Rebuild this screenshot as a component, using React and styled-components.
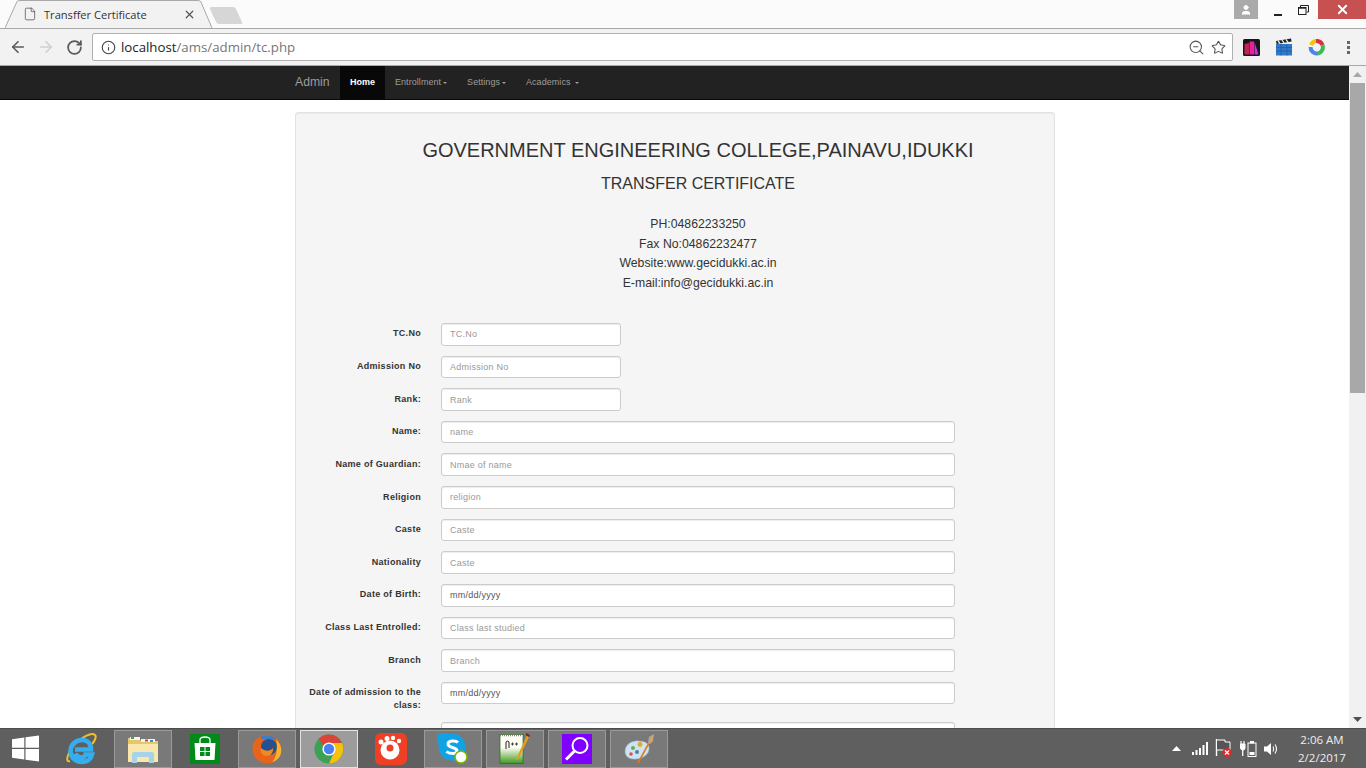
import React from "react"
import styled, { createGlobalStyle } from "styled-components"
import { ArrowLeft, ArrowRight, RotateCw, File, X, Info, ZoomOut, Star, User } from "lucide-react"

const GlobalStyle = createGlobalStyle`
  html, body {
    margin: 0;
    padding: 0;
    height: 768px;
    overflow: hidden;
    background: #fff;
  }
  * { box-sizing: border-box; }
`

const fields = [
  { label: "TC.No", placeholder: "TC.No", short: true },
  { label: "Admission No", placeholder: "Admission No", short: true },
  { label: "Rank:", placeholder: "Rank", short: true },
  { label: "Name:", placeholder: "name" },
  { label: "Name of Guardian:", placeholder: "Nmae of name" },
  { label: "Religion", placeholder: "religion" },
  { label: "Caste", placeholder: "Caste" },
  { label: "Nationality", placeholder: "Caste" },
  { label: "Date of Birth:", value: "mm/dd/yyyy" },
  { label: "Class Last Entrolled:", placeholder: "Class last studied" },
  { label: "Branch", placeholder: "Branch" },
  { label: "Date of admission to the class:", value: "mm/dd/yyyy" },
  { label: "", placeholder: "" },
]

function App() {
  return (
    <Screen>
      <GlobalStyle />
      <TabStrip>
        <Tab>
          <TabShape viewBox="0 0 208 28" width="208" height="28">
            <path d="M0 28 L12 1.5 Q13 .5 15 .5 L193 .5 Q195 .5 196 2 L207 28" fill="#f2f2f2" stroke="#a8a8a8" />
          </TabShape>
          <File size={14} strokeWidth={1.2} color="#444" />
          <TabTitle>Transffer Certificate</TabTitle>
          <X size={13} strokeWidth={2.2} color="#555" />
        </Tab>
        <NewTab />
        <WindowControls>
          <UserBadge><User size={12} fill="#fff" color="#fff" /></UserBadge>
          <WinButton>
            <svg width="9" height="12"><rect x="0" y="10" width="8" height="2" fill="#222" /></svg>
          </WinButton>
          <WinButton>
            <svg width="11" height="10" fill="none" stroke="#222">
              <path d="M2.5 2 V.5 H10.5 V7 H8.5" />
              <rect x=".5" y="2.5" width="7.5" height="7" />
              <path d="M0 3 H8" strokeWidth="1.4" />
            </svg>
          </WinButton>
          <CloseButton><X size={15} strokeWidth={3} color="#fff" /></CloseButton>
        </WindowControls>
      </TabStrip>

      <Toolbar>
        <NavIcon><ArrowLeft size={18} strokeWidth={2.2} color="#5a5a5a" /></NavIcon>
        <NavIcon><ArrowRight size={18} strokeWidth={2.2} color="#d0d0d0" /></NavIcon>
        <NavIcon><RotateCw size={17} strokeWidth={2.5} color="#5a5a5a" /></NavIcon>
        <Omnibox>
          <Info size={15} strokeWidth={1.8} color="#444" />
          <Url>localhost<span>/ams/admin/tc.php</span></Url>
          <ZoomOut size={17} strokeWidth={1.5} color="#555" />
          <Star size={15} strokeWidth={1.7} color="#555" />
        </Omnibox>
        <Extensions>
          <BooksIcon />
          <ClapperIcon />
          <RingIcon />
          <MenuDots><i /><i /><i /></MenuDots>
        </Extensions>
      </Toolbar>

      <Viewport>
        <Page>
          <NavBar>
            <Brand>Admin</Brand>
            <NavItem $active>Home</NavItem>
            <NavItem>Entrollment<Caret /></NavItem>
            <NavItem>Settings<Caret /></NavItem>
            <NavItem>Academics <Caret /></NavItem>
          </NavBar>
          <Well>
            <Header>
              <Title>GOVERNMENT ENGINEERING COLLEGE,PAINAVU,IDUKKI</Title>
              <SubTitle>TRANSFER CERTIFICATE</SubTitle>
              <Contact>
                <div>PH:04862233250</div>
                <div>Fax No:04862232477</div>
                <div>Website:www.gecidukki.ac.in</div>
                <div>E-mail:info@gecidukki.ac.in</div>
              </Contact>
            </Header>
            <Form>
              {fields.map((f, i) => (
                <Row key={i}>
                  <Label>{f.label}</Label>
                  <Input
                    $short={f.short}
                    placeholder={f.placeholder}
                    defaultValue={f.value}
                    readOnly
                  />
                </Row>
              ))}
            </Form>
          </Well>
        </Page>
        <Scrollbar>
          <ScrollArrow><svg width="9" height="5"><path d="M0 5 L4.5 0 L9 5Z" fill="#a8a8a8" /></svg></ScrollArrow>
          <ScrollThumb />
          <ScrollRest />
          <ScrollArrow><svg width="9" height="5"><path d="M0 0 L4.5 5 L9 0Z" fill="#505050" /></svg></ScrollArrow>
        </Scrollbar>
      </Viewport>

      <Taskbar>
        <StartSlot><WindowsLogo /></StartSlot>
        <TaskSlot><IeIcon /></TaskSlot>
        <TaskSlot $open><ExplorerIcon /></TaskSlot>
        <TaskSlot><StoreIcon /></TaskSlot>
        <TaskSlot $open><FirefoxIcon /></TaskSlot>
        <TaskSlot $open $active><ChromeIcon /></TaskSlot>
        <TaskSlot><GomIcon /></TaskSlot>
        <TaskSlot $open><SkypeIcon /></TaskSlot>
        <TaskSlot $open><NotepadIcon /></TaskSlot>
        <TaskSlot $open><SearchIcon /></TaskSlot>
        <TaskSlot $open><PaintIcon /></TaskSlot>
        <Tray>
          <TrayIcons />
          <Clock>
            <div>2:06 AM</div>
            <div>2/2/2017</div>
          </Clock>
        </Tray>
      </Taskbar>
    </Screen>
  )
}

export default App

/* browser chrome drawings */

function BooksIcon() {
  return (
    <svg width="17" height="17" viewBox="0 0 17 17">
      <rect width="17" height="17" rx="1.5" fill="#16161a" />
      <path d="M1.5 5 L6 4 V15.5 H1.5Z" fill="#c2264f" />
      <path d="M6.5 2.5 L11 2.5 V15.5 H6.5Z" fill="#e4209a" />
      <path d="M11.5 3 L15.5 15.5 H11.5Z" fill="#c930d8" />
    </svg>
  )
}

function ClapperIcon() {
  return (
    <svg width="18" height="18" viewBox="0 0 18 18">
      <path d="M1 3 L16 0.5 L16.6 3.5 L1.6 6Z" fill="#222" />
      <path d="M3 2.6 L5 5.6 M7 2 L9 5 M11 1.3 L13 4.3" stroke="#eee" strokeWidth="1.3" />
      <rect x="1" y="6" width="16" height="11.5" fill="#3278c8" />
      <path d="M1 9.5 H17 M1 13 H17 M6 6 V17.5 M12 6 V17.5" stroke="#1f5a9f" strokeWidth=".7" />
    </svg>
  )
}

function RingIcon() {
  return (
    <svg width="17" height="17" viewBox="0 0 17 17" fill="none" strokeWidth="4">
      <path d="M3 6 A6.5 6.5 0 0 1 8 2" stroke="#f4c20d" />
      <path d="M8 2 A6.5 6.5 0 0 1 14.5 6" stroke="#db3236" />
      <path d="M14.5 6 A6.5 6.5 0 0 1 10 14.5" stroke="#3cba54" />
      <path d="M10 14.5 A6.5 6.5 0 0 1 2.5 8" stroke="#4885ed" />
    </svg>
  )
}

/* taskbar drawings */

function WindowsLogo() {
  return (
    <svg width="27" height="27" viewBox="0 0 27 27" fill="#fff">
      <path d="M0 4.2 L12.3 2.5 V12.8 H0Z" />
      <path d="M13.5 2.3 L27 .4 V12.8 H13.5Z" />
      <path d="M0 14 H12.3 V24.5 L0 22.8Z" />
      <path d="M13.5 14 H27 V26.6 L13.5 24.7Z" />
    </svg>
  )
}

function IeIcon() {
  return (
    <svg width="32" height="32" viewBox="0 0 32 32" fill="none">
      <path d="M5 28 C0 30 2 21 9 12 C16 4 27 -1 30 2 C32 4 29 9 27 11" stroke="#f0bf2c" strokeWidth="2" />
      <path d="M10 16.5 H26 C26 10 22 7 17 7 C10 7 5.5 12.5 5.5 18 C5.5 25 11 29 17 29 C22 29 26 26 27 21.5 H20.5 C20 23.5 18.5 24.5 16.5 24.5 C13 24.5 11 22 10.5 20.5" stroke="#35aef0" strokeWidth="4.6" />
    </svg>
  )
}

function ExplorerIcon() {
  return (
    <svg width="32" height="28" viewBox="0 0 32 28">
      <path d="M1 3 H12 L14 6 H31 V26 H1Z" fill="#e8c66d" />
      <rect x="3" y="2" width="10" height="3" fill="#f4f4f0" />
      <rect x="4" y="2" width="3" height="2" fill="#3aa655" />
      <rect x="14" y="4" width="14" height="3" fill="#f4f4f0" />
      <rect x="18" y="4.5" width="3" height="2" fill="#c44" />
      <rect x="23" y="5" width="3" height="2" fill="#48c" />
      <path d="M1 9 H31 V27 H1Z" fill="#f8e8ad" />
      <path d="M5 28 V19 Q5 17 7 17 H25 Q27 17 27 19 V28 H22 V22 H10 V28Z" fill="#a7d3ea" />
    </svg>
  )
}

function StoreIcon() {
  return (
    <svg width="30" height="30" viewBox="0 0 30 30">
      <rect width="30" height="30" fill="#008a17" />
      <path d="M10 9 V6 Q10 3 15 3 Q20 3 20 6 V9" fill="none" stroke="#fff" strokeWidth="1.3" />
      <path d="M4.5 9 H25.5 L24.5 26 H5.5Z" fill="#fff" />
      <path d="M10 13 H14.5 V17 H10Z M15.5 13 H20 V17 H15.5Z M10 18 H14.5 V22 H10Z M15.5 18 H20 V22 H15.5Z" fill="#008a17" />
    </svg>
  )
}

function FirefoxIcon() {
  return (
    <svg width="30" height="30" viewBox="0 0 30 30">
      <circle cx="15" cy="15" r="14.5" fill="#e8641b" />
      <path d="M8 3 A14.5 14.5 0 0 1 29 12 C27 7 23 5 19 5 C14 5 11 7 8 3Z" fill="#3b7fc4" />
      <circle cx="17" cy="13" r="8" fill="#27508f" />
      <path d="M9 14 C12 17 18 18 21 14 C22 20 16 24 11 21 C9 19 8 17 9 14Z" fill="#f08a1f" />
      <path d="M24 5 C28 9 30 14 29 19 C28 24 24 27 20 28 C25 23 26 13 24 5Z" fill="#f9b32c" />
    </svg>
  )
}

function ChromeIcon() {
  return (
    <svg width="30" height="30" viewBox="0 0 30 30">
      <circle cx="15" cy="15" r="14.5" fill="#3ba153" />
      <path d="M15 .5 A14.5 14.5 0 0 1 28 9 H15 A6 6 0 0 0 9.5 12 L4.5 5 A14.5 14.5 0 0 1 15 .5Z" fill="#db4437" />
      <path d="M28 9 A14.5 14.5 0 0 1 15 29.5 L20 18.5 A6 6 0 0 0 20 12 L17 9Z" fill="#f4c20d" />
      <circle cx="15" cy="15" r="6.6" fill="#fff" />
      <circle cx="15" cy="15" r="5.2" fill="#4a80f0" />
    </svg>
  )
}

function GomIcon() {
  return (
    <svg width="32" height="32" viewBox="0 0 32 32">
      <rect width="32" height="32" rx="6" fill="#ef3f24" />
      <circle cx="15" cy="17" r="9.5" fill="#fff" />
      <circle cx="15" cy="15" r="3.5" fill="#ef3f24" />
      <circle cx="6" cy="9" r="2.5" fill="#fff" />
      <circle cx="12" cy="5.5" r="2.5" fill="#fff" />
      <circle cx="18" cy="5" r="2.2" fill="#fff" />
      <circle cx="24" cy="8" r="2.2" fill="#fff" />
    </svg>
  )
}

function SkypeIcon() {
  return (
    <svg width="32" height="32" viewBox="0 0 32 32">
      <circle cx="15" cy="14" r="13.5" fill="#0fa3e6" />
      <rect x="0" y="0" width="12" height="12" rx="5" fill="#0fa3e6" />
      <path d="M21 9.5 C19 7.5 11 7 11 11 C11 15.5 20 13.5 20 18 C20 21.5 12 21 9.5 18.5" fill="none" stroke="#fff" strokeWidth="3" />
      <circle cx="24" cy="24" r="6" fill="#fff" stroke="#7ab800" strokeWidth="1.6" />
    </svg>
  )
}

function NotepadIcon() {
  return (
    <svg width="32" height="32" viewBox="0 0 32 32">
      <defs>
        <linearGradient id="np" x1="0" y1="0" x2="0" y2="1">
          <stop offset="0.45" stopColor="#fdfdf4" />
          <stop offset="1" stopColor="#3f9a1e" />
        </linearGradient>
      </defs>
      <rect x="1" y="1.5" width="23" height="29" fill="url(#np)" stroke="#2a6a12" strokeWidth=".7" />
      <path d="M1 2.5 H22" stroke="#888" strokeWidth="1.5" strokeDasharray="1 1" />
      <path d="M7 16 V9 Q9 7 10 9 V15" fill="none" stroke="#222" strokeWidth="1" />
      <path d="M12 11 H15 M13.5 9.5 V12.5 M16 11 H19 M17.5 9.5 V12.5" stroke="#222" strokeWidth=".8" />
      <path d="M28 2 L18 24 L16.5 27.5 L20 25 L30 4Z" fill="#e3a11a" />
      <path d="M27 0 L31 2 L30 4 L27 2.5Z" fill="#7a2a2a" />
    </svg>
  )
}

function SearchIcon() {
  return (
    <svg width="30" height="30" viewBox="0 0 30 30">
      <rect width="30" height="30" fill="#7f00ff" />
      <circle cx="18" cy="11.5" r="7.5" fill="none" stroke="#fff" strokeWidth="2" />
      <path d="M12.5 17 L4 25.5" stroke="#fff" strokeWidth="3" />
    </svg>
  )
}

function PaintIcon() {
  return (
    <svg width="32" height="32" viewBox="0 0 32 32">
      <path d="M2 18 C2 11 10 7 16 8 C24 8 27 12 26 17 C25 23 17 27 9 26 C4 25 2 22 2 18Z" fill="#cfe4f2" stroke="#7fa9c4" strokeWidth=".6" />
      <circle cx="10" cy="15" r="2" fill="#5bb05b" />
      <circle cx="17" cy="11.5" r="2.4" fill="#e8a72a" />
      <circle cx="8" cy="21" r="1.8" fill="#d9534f" />
      <circle cx="14" cy="19" r="2" fill="#557fa8" />
      <path d="M26 10 L15 30" stroke="#e07b1a" strokeWidth="1.6" />
      <path d="M25 10 L26 4 L31 1 L30 8 L27 11Z" fill="#c9a47a" />
    </svg>
  )
}

function TrayIcons() {
  return (
    <TrayRow>
      <svg width="9" height="5"><path d="M0 5 L4.5 0 L9 5Z" fill="#fff" /></svg>
      <svg width="16" height="13" fill="#fff">
        <rect x="0" y="10" width="2" height="3" />
        <rect x="3.5" y="8" width="2" height="5" />
        <rect x="7" y="6" width="2" height="7" />
        <rect x="10.5" y="3" width="2" height="10" />
        <rect x="14" y="0" width="2" height="13" />
      </svg>
      <svg width="18" height="19">
        <path d="M1.5 0 V17" stroke="#fff" strokeWidth="1.4" />
        <path d="M2 1 H10 V3 H15 V11 H2" fill="#555" stroke="#fff" />
        <circle cx="12" cy="13.5" r="4.5" fill="#e02a2a" />
        <path d="M10 11.5 L14 15.5 M14 11.5 L10 15.5" stroke="#fff" strokeWidth="1.2" />
      </svg>
      <svg width="17" height="16" fill="none" stroke="#fff">
        <path d="M1 0 V3 M4 0 V3" strokeWidth="1.2" />
        <path d="M.5 3 H5 V7 Q5 9 3 9 Q.5 9 .5 7Z" fill="#fff" />
        <path d="M2.7 9 V15" strokeWidth="1.3" />
        <rect x="8" y="2" width="8" height="13.5" />
        <rect x="10.5" y=".5" width="3" height="1.5" fill="#fff" />
        <rect x="9.5" y="11" width="5" height="3" fill="#fff" stroke="none" />
      </svg>
      <svg width="15" height="14" fill="none" stroke="#fff">
        <path d="M0 4.5 H3 L7 1 V13 L3 9.5 H0Z" fill="#fff" stroke="none" />
        <path d="M9 4.5 Q10.5 7 9 9.5" strokeWidth="1.1" />
        <path d="M11 2.5 Q14 7 11 11.5" strokeWidth="1.1" />
      </svg>
    </TrayRow>
  )
}

/* layout */

const Screen = styled.div`
  width: 1366px;
  height: 768px;
  display: flex;
  flex-direction: column;
  overflow: hidden;
  font-family: "Liberation Sans", Arial, sans-serif;
`

const TabStrip = styled.div`
  height: 29px;
  flex: none;
  display: flex;
  padding-left: 5px;
  background: #fbfbfb;
  border-bottom: 1px solid #a8a8a8;
`

const Tab = styled.div`
  position: relative;
  width: 208px;
  height: 28px;
  padding: 0 17px 0 18px;
  display: flex;
  align-items: center;
  z-index: 1;

  svg:not(:first-child) {
    position: relative;
    flex: none;
  }
`

const TabShape = styled.svg`
  position: absolute;
  top: 0;
  left: 0;
`

const TabTitle = styled.span`
  position: relative;
  flex: 1;
  margin-left: 7px;
  font: 11.1px "Open Sans", "Noto Sans", sans-serif;
  color: #333;
  white-space: nowrap;
`

const NewTab = styled.div`
  width: 26px;
  height: 17px;
  margin: 7px 0 0 0;
  background: #d6d6d6;
  border-radius: 2px;
  transform: skewX(25deg);
`

const WindowControls = styled.div`
  margin-left: auto;
  display: flex;
  align-items: flex-start;
`

const UserBadge = styled.div`
  width: 24px;
  height: 19px;
  margin-right: 8px;
  background: #aaa;
  display: flex;
  align-items: center;
  justify-content: center;
`

const WinButton = styled.div`
  width: 25px;
  height: 19px;
  padding-top: 1px;
  display: flex;
  align-items: center;
  justify-content: center;
`

const CloseButton = styled.div`
  width: 48px;
  height: 19px;
  margin-left: 2px;
  background: #c75050;
  display: flex;
  align-items: center;
  justify-content: center;
`

const Toolbar = styled.div`
  height: 37px;
  flex: none;
  display: flex;
  align-items: center;
  padding-left: 4px;
  background: #f2f2f2;
  border-bottom: 1px solid #a8a8a8;
`

const NavIcon = styled.div`
  width: 28px;
  height: 28px;
  display: flex;
  align-items: center;
  justify-content: center;
`

const Omnibox = styled.div`
  width: 1141px;
  height: 28px;
  margin-left: 4px;
  padding: 0 6px 0 8px;
  display: flex;
  align-items: center;
  gap: 6.5px;
  background: #fff;
  border: 1px solid #b0b0b0;
  border-radius: 2px;
`

const Url = styled.div`
  flex: 1;
  margin-left: -1.5px;
  font: 13.25px "Open Sans", "Noto Sans", sans-serif;
  color: #222;

  span { color: #777; }
`

const Extensions = styled.div`
  display: flex;
  align-items: center;
  margin-left: 10px;
  gap: 15px;
`

const MenuDots = styled.div`
  width: 17px;
  display: flex;
  flex-direction: column;
  align-items: center;
  gap: 2px;

  i {
    width: 3px;
    height: 3px;
    background: #666;
  }
`

const Viewport = styled.div`
  height: 662px;
  flex: none;
  display: flex;
  background: #fff;
`

const Page = styled.div`
  width: 1349px;
  overflow: hidden;
`

const NavBar = styled.div`
  height: 34px;
  padding-left: 295px;
  display: flex;
  align-items: stretch;
  background: #222;
  border-bottom: 1px solid #080808;
`

const Brand = styled.div`
  width: 45px;
  font-size: 12.2px;
  line-height: 32px;
  color: #9d9d9d;
`

const NavItem = styled.div`
  padding: 0 10px;
  font-size: 9px;
  font-weight: ${p => (p.$active ? 700 : 400)};
  letter-spacing: ${p => (p.$active ? 0 : 0.05)}px;
  line-height: 32px;
  color: ${p => (p.$active ? "#fff" : "#9d9d9d")};
  background: ${p => (p.$active ? "#080808" : "transparent")};
`

const Caret = styled.span`
  display: inline-block;
  width: 0;
  height: 0;
  margin-left: 2px;
  vertical-align: middle;
  border-top: 2px solid #9d9d9d;
  border-left: 2px solid transparent;
  border-right: 2px solid transparent;
`

const Well = styled.div`
  width: 760px;
  height: 800px;
  margin: 12px 0 0 295px;
  background: #f5f5f5;
  border: 1px solid #e3e3e3;
  border-radius: 3px;
  box-shadow: inset 0 1px 1px rgba(0, 0, 0, .05);
`

const Header = styled.div`
  padding: 24px 0 0 46px;
  text-align: center;
  color: #333;
`

const Title = styled.h3`
  margin: 0;
  font-size: 20px;
  font-weight: 400;
  line-height: 26px;
`

const SubTitle = styled.h4`
  margin: 11px 0 0;
  font-size: 16px;
  font-weight: 400;
  line-height: 20px;
`

const Contact = styled.div`
  margin-top: 21px;
  font-size: 12.25px;
  line-height: 19.6px;
`

const Form = styled.div`
  margin-top: 29.6px;
  display: flex;
  flex-direction: column;
  gap: 10px;
`

const Row = styled.div`
  display: flex;
  align-items: flex-start;
  min-height: 22.64px;
`

const Label = styled.label`
  width: 125px;
  flex: none;
  padding-top: 4.5px;
  text-align: right;
  font-size: 9px;
  font-weight: 700;
  line-height: 13px;
  letter-spacing: .3px;
  color: #333;
`

const Input = styled.input`
  width: ${p => (p.$short ? 180 : 514)}px;
  height: 22.64px;
  margin-left: 20px;
  padding: 0 8px;
  font: 9px "Liberation Sans", Arial, sans-serif;
  letter-spacing: .25px;
  color: #555;
  background: #fff;
  border: 1px solid #ccc;
  border-radius: 3px;
  box-shadow: inset 0 1px 1px rgba(0, 0, 0, .075);
  outline: none;

  &::placeholder { color: #999; opacity: 1; }
`

const Scrollbar = styled.div`
  width: 17px;
  display: flex;
  flex-direction: column;
  background: #f1f1f1;
`

const ScrollArrow = styled.div`
  height: 17px;
  flex: none;
  display: flex;
  align-items: center;
  justify-content: center;
`

const ScrollThumb = styled.div`
  height: 310px;
  flex: none;
  background: #a8a8a8;
  margin: 0 1px;
`

const ScrollRest = styled.div`
  flex: 1;
`

const Taskbar = styled.div`
  height: 40px;
  flex: none;
  display: flex;
  align-items: center;
  gap: 4px;
  color: #fff;
  background: #5f5f5f;
  border-top: 1px solid #4c4c4c;
`

const StartSlot = styled.div`
  width: 48px;
  display: flex;
  justify-content: center;
  padding-left: 2px;
`

const TaskSlot = styled.div`
  width: 58px;
  height: 38px;
  display: flex;
  align-items: center;
  justify-content: center;
  background: ${p => (p.$active ? "#9c9c9c" : p.$open ? "#797979" : "transparent")};
  border: ${p => (p.$open ? "1px" : "0")} solid ${p => (p.$active ? "#e2e2e2" : "#9a9a9a")};
`

const Tray = styled.div`
  margin-left: auto;
  display: flex;
  align-items: center;
`

const TrayRow = styled.div`
  display: flex;
  align-items: center;
  gap: 7px;

  svg:first-child { margin-right: 4px; }
`

const Clock = styled.div`
  width: 73px;
  margin: 0 7.5px 0 7px;
  text-align: center;
  font: 11.5px/18px "Open Sans", "Noto Sans", sans-serif;
  color: #eee;
`
